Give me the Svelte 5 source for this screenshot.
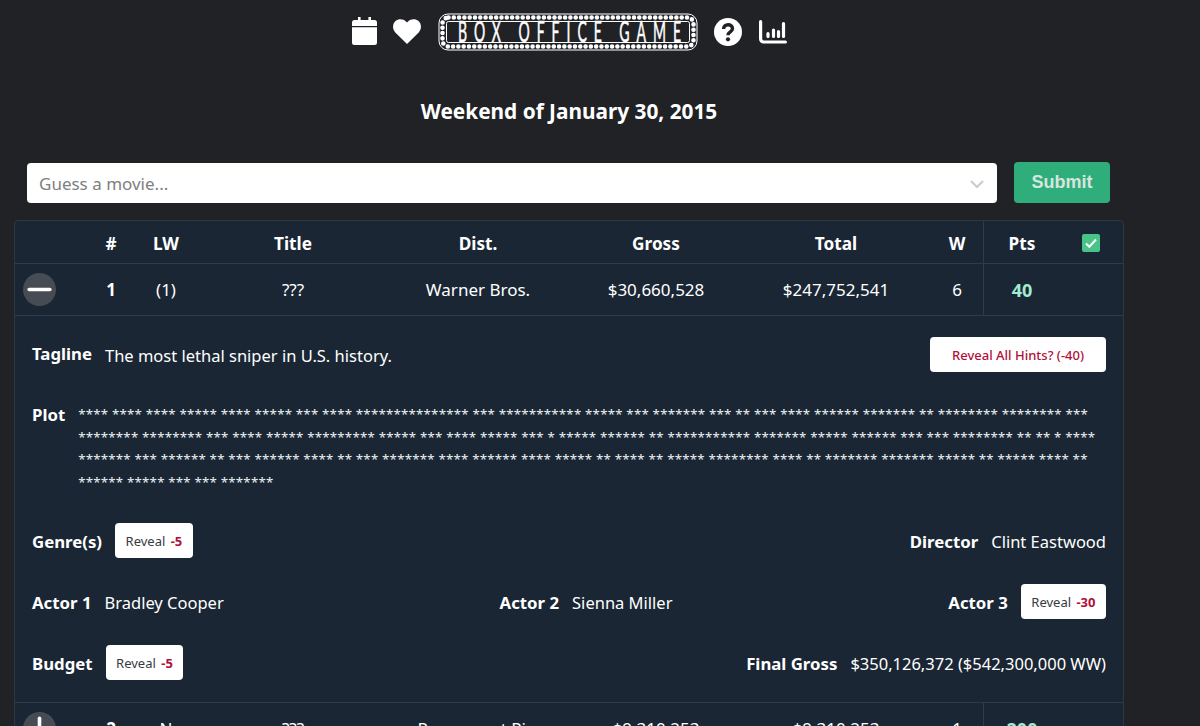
<script>
  const plot = [
    "**** **** **** ***** **** ***** *** **** *************** *** *********** ***** *** ******* *** ** *** **** ****** ******* ** ******** ******** ***",
    "******** ******** *** **** ***** ********* ***** *** **** ***** *** * ***** ****** ** *********** ******* ***** ****** *** *** ******** ** ** * ****",
    "******* *** ****** ** *** ****** **** ** *** ******* **** ****** **** ***** ** **** ** ***** ******** **** ** ******* ******* ***** ** ***** **** **",
    "****** ***** *** *** *******"
  ];
  const rows = [
    { n: '1', lw: '(1)', dist: 'Warner Bros.', gross: '$30,660,528', total: '$247,752,541', w: '6', pts: '40', open: true },
    { n: '2', lw: 'N', dist: 'Paramount Pic.', gross: '$9,310,253', total: '$9,310,253', w: '1', pts: '200', open: false }
  ];
</script>

<div class="page">
  <nav class="nav">
    <svg class="ico cal" viewBox="0 0 25 28" aria-label="calendar"><path fill="#fff" d="M6 0h2.600v3h7.800V0H19v3h3.500A2.500 2.500 0 0 1 25 5.500V9H0V5.500A2.500 2.500 0 0 1 2.500 3H6zM0 10.300h25v15.200a2.500 2.500 0 0 1-2.500 2.500h-20A2.500 2.500 0 0 1 0 25.500z"/></svg>
    <svg class="ico heart" viewBox="0 0 28 25" aria-label="favourites"><path fill="#fff" d="M14 25 2.300 13.400C-.8 10.300-.7 5 2.500 2.100 5.500-.7 10.200-.4 13 2.500l1 1.100 1-1.100C17.800-.4 22.500-.7 25.500 2.100c3.200 2.900 3.300 8.200.2 11.300z"/></svg>
    <svg class="logo" viewBox="0 0 260 38" role="img" aria-label="Box Office Game">
      <rect x="1" y="1" width="258" height="36" rx="9" fill="none" stroke="#fff" stroke-width="1"/>
      <rect x="4.500" y="4.500" width="251" height="29" rx="6" fill="none" stroke="#fff" stroke-width="4.600" stroke-linecap="round" stroke-dasharray="0 5.300"/>
      <rect x="8.500" y="8.500" width="243" height="21" rx="2" fill="none" stroke="#fff" stroke-width="1"/>
      <text class="logotext" transform="translate(20 29) scale(.5 1)" textLength="446" lengthAdjust="spacing">BOX OFFICE GAME</text>
    </svg>
    <svg class="ico help" viewBox="0 0 28 28" aria-label="help">
      <circle cx="14" cy="14" r="14" fill="#fff"/>
      <path fill="none" stroke="#212226" stroke-width="3.400" d="M9.600 11c0-2.700 2-4.300 4.500-4.300s4.400 1.500 4.400 3.800c0 3.400-4.500 3.300-4.500 6.700"/>
      <circle cx="14" cy="21.300" r="2.100" fill="#212226"/>
    </svg>
    <svg class="ico chart" viewBox="0 0 28 24" aria-label="statistics" fill="none" stroke="#fff" stroke-linecap="round">
      <path stroke-width="3.200" d="M1.600 1.600v17.400a3 3 0 0 0 3 3h21.800"/>
      <path stroke-width="3.200" d="M9 13.500v3M14.500 10v6.500M19.500 11.500v5M24.500 3.500v13"/>
    </svg>
  </nav>

  <h1 class="weekend">Weekend of January 30, 2015</h1>

  <form class="guess" onsubmit={(e) => e.preventDefault()}>
    <div class="select">
      <span class="placeholder">Guess a movie...</span>
      <svg class="chev" viewBox="0 0 16 10" fill="none" stroke="#ccc" stroke-width="2.200"><path d="M2 2l6 6 6-6"/></svg>
    </div>
    <button class="submit" type="submit">Submit</button>
  </form>

  <section class="board">
    <div class="grid head">
      <span></span><span>#</span><span>LW</span><span>Title</span><span>Dist.</span><span>Gross</span><span>Total</span><span>W</span>
      <span class="pts">Pts</span>
      <span class="checkcell"><span class="check"><svg viewBox="0 0 18 18" fill="none" stroke="#fff" stroke-width="2"><path d="M4 9.500l3.300 3.200L14 5.500"/></svg></span></span>
    </div>

    {#each rows as r}
      <div class="grid row">
        <span class="togglecell">
          <span class="toggle">
            <svg viewBox="0 0 32 32" fill="none" stroke="#fff" stroke-width="3.500" stroke-linecap="round">
              <path d="M6 16h20"/>
              {#if !r.open}<path d="M16 6v20"/>{/if}
            </svg>
          </span>
        </span>
        <span class="strong">{r.n}</span><span>{r.lw}</span><span>???</span><span>{r.dist}</span><span>{r.gross}</span><span>{r.total}</span><span>{r.w}</span>
        <span class="pts points">{r.pts}</span><span></span>
      </div>

      {#if r.open}
        <div class="detail">
          <div class="line tagline">
            <div class="pair"><b>Tagline</b><span>The most lethal sniper in U.S. history.</span></div>
            <button class="all">Reveal All Hints? (-40)</button>
          </div>
          <div class="plot">
            <b>Plot</b>
            <div class="stars">{#each plot as l}<div>{l}</div>{/each}</div>
          </div>
          <div class="line genre">
            <div class="pair"><b>Genre(s)</b><button class="reveal">Reveal <em>-5</em></button></div>
            <div class="pair"><b>Director</b><span>Clint Eastwood</span></div>
          </div>
          <div class="line actors">
            <div class="pair"><b>Actor 1</b><span>Bradley Cooper</span></div>
            <div class="pair"><b>Actor 2</b><span>Sienna Miller</span></div>
            <div class="pair"><b>Actor 3</b><button class="reveal">Reveal <em>-30</em></button></div>
          </div>
          <div class="line budget">
            <div class="pair"><b>Budget</b><button class="reveal">Reveal <em>-5</em></button></div>
            <div class="pair"><b>Final Gross</b><span>$350,126,372 ($542,300,000 WW)</span></div>
          </div>
        </div>
      {/if}
    {/each}
  </section>
</div>

<style>
  :global(body) {
    margin: 0;
    background: #212226;
    color: #fff;
    font-family: "Noto Sans", "Open Sans", sans-serif;
    overflow: hidden;
  }
  .page {
    width: 1110px;
    padding: 14px 14px 0;
  }
  .nav {
    display: flex;
    align-items: center;
    justify-content: center;
    height: 36px;
  }
  .ico { display: block; flex: none; }
  .cal { width: 25px; height: 28px; margin: -2px 16px 0 0; }
  .heart { width: 28px; height: 25px; margin: -1px 17px 0 0; }
  .logo { width: 260px; height: 38px; margin-right: 16px; }
  .help { width: 28px; height: 28px; margin-right: 17px; }
  .chart { width: 28px; height: 24px; margin-top: -1px; }
  .logotext {
    fill: #fff;
    stroke: #fff;
    stroke-width: 0.6px;
    font-family: "Lato", sans-serif;
    font-size: 28px;
    font-weight: 400;
  }
  .weekend {
    margin: 46px 0 0;
    text-align: center;
    font-size: 20.800px;
    line-height: 30px;
    font-weight: 700;
  }
  .guess {
    display: flex;
    align-items: center;
    gap: 17px;
    margin: 36px 14px 0 13px;
  }
  .select {
    flex: 1;
    height: 40px;
    display: flex;
    align-items: center;
    justify-content: space-between;
    background: #fff;
    border-radius: 4px;
    padding: 2px 12px 0;
    box-sizing: border-box;
  }
  .placeholder { color: #808080; font-size: 17px; }
  .chev { width: 16px; height: 10px; }
  .submit {
    width: 96px;
    height: 41px;
    border: 0;
    border-radius: 4px;
    background: #2fad7b;
    color: #d6e6df;
    font-family: "Liberation Sans", sans-serif;
    font-weight: 700;
    font-size: 18px;
  }
  .board {
    margin-top: 17px;
    background: #1a2634;
    border: 1px solid #2b3848;
    border-radius: 4px;
    font-size: 17px;
  }
  .grid {
    display: grid;
    grid-template-columns: 76px 40px 70px 184px 186px 170px 190px 52px 77px 1fr;
    align-items: stretch;
    border-bottom: 1px solid #2d3b4a;
    text-align: center;
  }
  .grid > span {
    display: flex;
    align-items: center;
    justify-content: center;
  }
  .head { height: 42px; font-weight: 700; font-size: 17.200px; }
  .head > span { padding-top: 2px; }
  .row { height: 51px; }
  .grid > .pts { border-left: 1px solid #2d3b4a; }
  .points { color: #a3ebd0; font-weight: 700; font-size: 18px; }
  .strong { font-weight: 700; }
  .checkcell { padding-right: 2px; }
  .check {
    width: 18px;
    height: 18px;
    background: #48c488;
    border-radius: 2px;
    display: block;
  }
  .check svg { display: block; }
  .toggle {
    width: 33px;
    height: 33px;
    border-radius: 50%;
    background: #474c54;
    display: block;
  }
  .toggle svg { display: block; width: 33px; height: 33px; }
  .grid > .togglecell { justify-content: flex-start; padding-left: 8px; }
  .detail {
    padding: 21px 17px 22px 17px;
    border-bottom: 1px solid #2d3b4a;
    font-size: 16.500px;
  }
  .line {
    display: flex;
    align-items: center;
    justify-content: space-between;
    height: 35px;
  }
  .pair { display: flex; align-items: center; gap: 13px; }
  .pair > b, .pair > span { padding-top: 2px; }
  b { font-weight: 700; font-size: 16.800px; }
  .tagline b { padding: 0 0 2px; }
  .tagline span { padding-top: 2px; }
  .plot {
    display: flex;
    gap: 13px;
    margin-top: 31px;
  }
  .stars {
    font-size: 13.300px;
    letter-spacing: 0.2px;
    line-height: 22.500px;
    white-space: nowrap;
    color: #eef2f5;
  }
  .plot b { line-height: 20px; padding-top: 2px; }
  .genre { margin-top: 30px; }
  .actors { margin-top: 26px; }
  .budget { margin-top: 26px; }
  button { font-family: inherit; cursor: pointer; }
  .all {
    width: 176px;
    height: 35px;
    background: #fff;
    border: 0;
    border-radius: 4px;
    color: #b0103a;
    font-size: 13px;
    font-weight: 500;
  }
  .reveal {
    height: 35px;
    padding: 0 10.500px;
    background: #fff;
    border: 0;
    border-radius: 4px;
    color: #363a42;
    font-size: 13px;
  }
  .reveal em {
    font-style: normal;
    font-weight: 700;
    color: #b0103a;
    margin-left: 2px;
  }
</style>
